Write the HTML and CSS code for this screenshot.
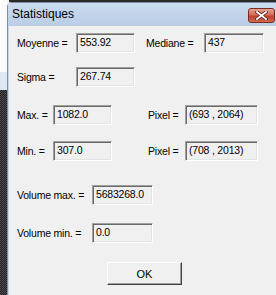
FILE: index.html
```html
<!DOCTYPE html>
<html lang="fr">

<head>
	<title>Statistiques</title>
	<link rel="stylesheet" href="styles.css">
</head>

<body>

	<div class="screen">
		<div class="side">
			<div class="side-top"></div>
			<div class="side-band"></div>
			<div class="side-dark"></div>
		</div>

		<div class="main">
			<div class="topline"></div>
			<div class="window">
				<div class="titlebar">
					<span class="title">Statistiques</span>
					<span class="close">
						<svg width="13" height="9" viewBox="0 0 13 9">
							<path d="M2 1 L11 8 M11 1 L2 8" stroke="#5a1a12" stroke-width="3.4" stroke-linecap="square"/>
							<path d="M2 1 L11 8 M11 1 L2 8" stroke="#ffffff" stroke-width="1.8" stroke-linecap="square"/>
						</svg>
					</span>
				</div>

				<div class="content">
					<div class="row row-1">
						<span class="label w-59">Moyenne =</span>
						<span class="field w-box1">553.92</span>
						<span class="label second w-58">Mediane =</span>
						<span class="field w-box2">437</span>
					</div>
					<div class="row row-2">
						<span class="label w-59">Sigma =</span>
						<span class="field w-box1">267.74</span>
					</div>
					<div class="row row-3">
						<span class="label w-36">Max. =</span>
						<span class="field w-box1">1082.0</span>
						<span class="label third w-37">Pixel =</span>
						<span class="field w-pix">(693 , 2064)</span>
					</div>
					<div class="row row-4">
						<span class="label w-36">Min. =</span>
						<span class="field w-box1">307.0</span>
						<span class="label third w-37">Pixel =</span>
						<span class="field w-pix">(708 , 2013)</span>
					</div>
					<div class="row row-5">
						<span class="label w-75">Volume max. =</span>
						<span class="field w-vol">5683268.0</span>
					</div>
					<div class="row row-6">
						<span class="label w-75">Volume min. =</span>
						<span class="field w-vol">0.0</span>
					</div>
					<div class="buttons">
						<button class="ok">OK</button>
					</div>
				</div>
			</div>
		</div>
	</div>

</body>

</html>
```

FILE: styles.css
```css
body { margin: 0; background: #f0f0f0; font-family: "Liberation Sans", Arial, sans-serif; font-size: 10.5px; letter-spacing: -0.2px; color: #000; overflow: hidden;}

.screen { display: flex; width: 276px; height: 295px; }

/* desktop behind the dialog */
.side { width: 7px; display: flex; flex-direction: column; }
.side-top { height: 72px; background: #fbfbfb; border-left: 1px solid #fff; box-shadow: inset -5px 0 0 #fbfbfb, inset -4px 0 0 #9a9a9a; }
.side-band { height: 18px; background: #dde8f3; }
.side-dark { flex: 1; background: repeating-conic-gradient(#1c1c1c 0 25%, #505050 0 50%) 0 0 / 2px 2px; }

.main { flex: 1; display: flex; flex-direction: column; }
.topline { height: 2px; background: #2a2a2a; margin-left: 2px; }

.window {
	flex: 1;
	display: flex;
	flex-direction: column;
	border-left: 1px solid #7d8fa6;
	border-top: 1px solid #7d8fa6;
	border-top-left-radius: 5px;
	background: #c4d6ec;
}

.titlebar {
	height: 23px;
	display: flex;
	justify-content: space-between;
	align-items: flex-start;
	background: linear-gradient(#cddcef, #b9cde6);
	padding-left: 4px;
	padding-right: 1px;
}
.title { line-height: 23px; font-size: 12px; letter-spacing: 0; color: #000; }
.close {
	flex: none;
	margin-top: 5px;
	width: 25px;
	height: 13px;
	display: flex;
	align-items: center;
	justify-content: center;
	border: 1px solid #7b2a1f;
	border-radius: 3px;
	background: linear-gradient(#e6a494, #d36c57 45%, #c0412c 55%, #cf6a50);
}

.content { flex: 1; background: #f0f0f0; margin-left: 1px; padding-left: 8px; padding-top: 7px; }

.row { display: flex; align-items: center; height: 20px; }
.row-2 { margin-top: 14px; }
.row-3 { margin-top: 18px; }
.row-4 { margin-top: 16px; }
.row-5 { margin-top: 24px; }
.row-6 { margin-top: 18px; }

.label { flex: none; white-space: nowrap; }
.second { margin-left: 11px; }
.third { margin-left: 36px; }
.w-36 { width: 36px; }
.w-37 { width: 37px; }
.w-58 { width: 58px; }
.w-59 { width: 59px; }
.w-75 { width: 75px; }

.field {
	flex: none;
	box-sizing: border-box;
	height: 20px;
	line-height: 17px;
	padding-left: 3px;
	white-space: nowrap;
	background: #f0f0f0;
	border-top: 1px solid #a0a0a0;
	border-left: 1px solid #a0a0a0;
	border-right: 1px solid #ffffff;
	border-bottom: 1px solid #ffffff;
	box-shadow: inset 1px 1px 0 #696969, inset -1px -1px 0 #e3e3e3;
}
.w-box1 { width: 59px; }
.w-box2 { width: 60px; }
.w-pix { width: 73px; }
.w-vol { width: 61px; }

.buttons { margin-top: 19px; padding-left: 90px; }
.ok {
	width: 75px;
	height: 23px;
	font-family: "Liberation Sans", Arial, sans-serif;
	font-size: 11px;
	color: #000;
	background: #f0f0f0;
	border: 1px solid;
	border-color: #ffffff #404040 #404040 #ffffff;
	box-shadow: inset -1px -1px 0 #a0a0a0;
	padding: 0;
}
```
